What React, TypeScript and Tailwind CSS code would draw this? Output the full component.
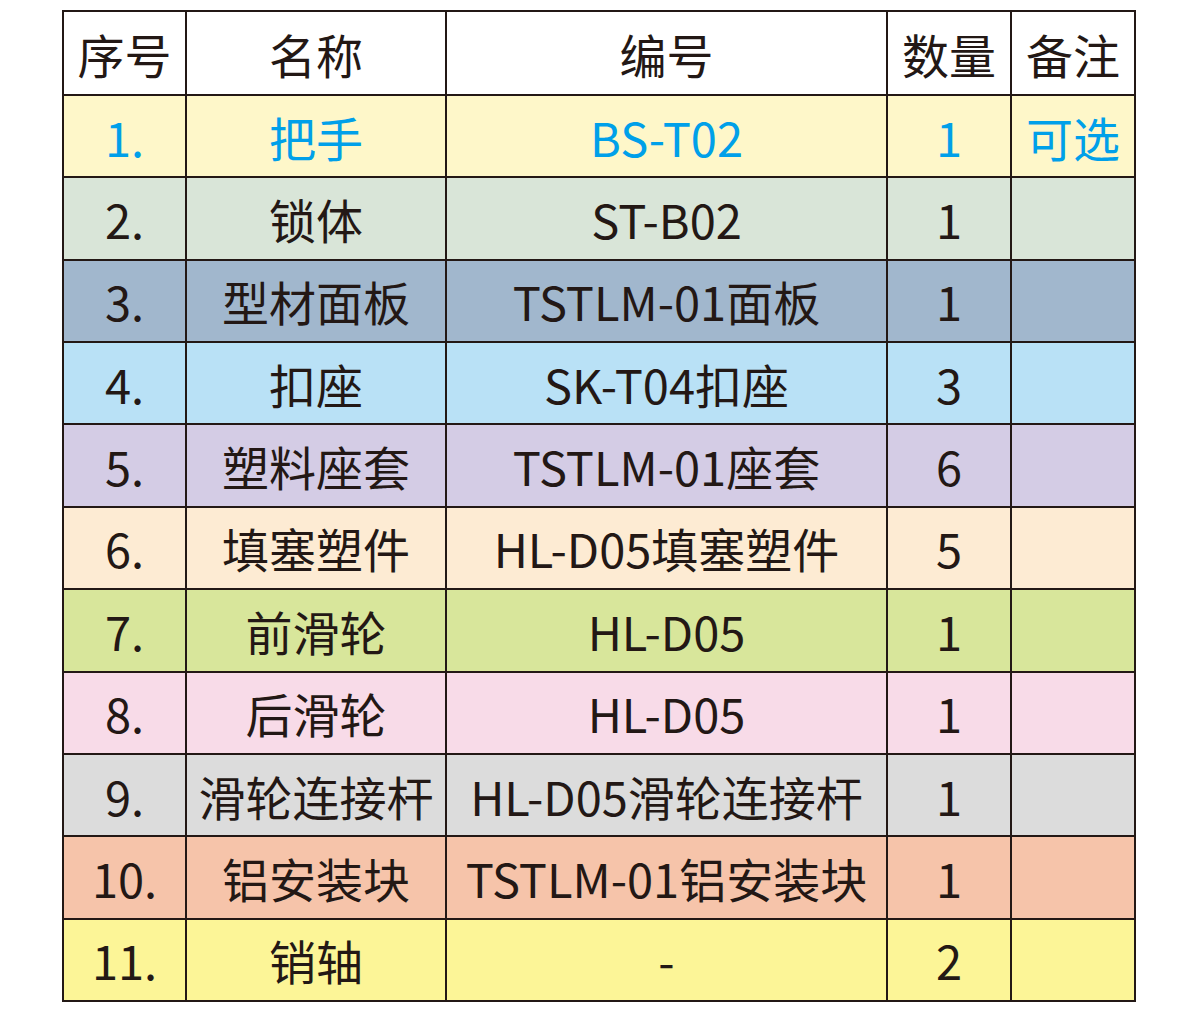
const rows = [
  { no: "1.", name: "把手", code: "BS-T02", qty: "1", note: "可选", bg: "bg-[#fef7c9]", blue: true },
  { no: "2.", name: "锁体", code: "ST-B02", qty: "1", note: "", bg: "bg-[#d9e5d8]" },
  { no: "3.", name: "型材面板", code: "TSTLM-01面板", qty: "1", note: "", bg: "bg-[#a1b7cd]" },
  { no: "4.", name: "扣座", code: "SK-T04扣座", qty: "3", note: "", bg: "bg-[#b9e1f6]" },
  { no: "5.", name: "塑料座套", code: "TSTLM-01座套", qty: "6", note: "", bg: "bg-[#d4cce5]" },
  { no: "6.", name: "填塞塑件", code: "HL-D05填塞塑件", qty: "5", note: "", bg: "bg-[#fdebd3]" },
  { no: "7.", name: "前滑轮", code: "HL-D05", qty: "1", note: "", bg: "bg-[#d8e69b]" },
  { no: "8.", name: "后滑轮", code: "HL-D05", qty: "1", note: "", bg: "bg-[#f8dbe8]" },
  { no: "9.", name: "滑轮连接杆", code: "HL-D05滑轮连接杆", qty: "1", note: "", bg: "bg-[#dcdcdc]" },
  { no: "10.", name: "铝安装块", code: "TSTLM-01铝安装块", qty: "1", note: "", bg: "bg-[#f6c4aa]" },
  { no: "11.", name: "销轴", code: "-", qty: "2", note: "", bg: "bg-[#fcf597]" },
];

function Cell({ children, bg, blue }: { children: React.ReactNode; bg: string; blue?: boolean }) {
  return (
    <div
      className={`${bg} flex items-center justify-center whitespace-nowrap text-[47px] leading-none ${
        blue ? "text-[#00a0e9]" : "text-[#231815]"
      }`}
    >
      {children}
    </div>
  );
}

export default function App() {
  return (
    <div
      className="w-[1200px] h-[1013px] bg-white pt-[10px] pl-[62px]"
      style={{ fontFamily: '"Noto Sans CJK SC", "Noto Sans", sans-serif' }}
    >
      <div className="grid w-[1074px] h-[992px] gap-[2px] p-[2px] bg-[#231815] grid-cols-[121px_258px_439px_122px_122px] grid-rows-[82px_repeat(11,1fr)]">
        {["序号", "名称", "编号", "数量", "备注"].map((h) => (
          <Cell key={h} bg="bg-white">
            {h}
          </Cell>
        ))}
        {rows.map((r) => (
          <>
            <Cell key={r.no + "a"} bg={r.bg} blue={r.blue}>{r.no}</Cell>
            <Cell key={r.no + "b"} bg={r.bg} blue={r.blue}>{r.name}</Cell>
            <Cell key={r.no + "c"} bg={r.bg} blue={r.blue}>{r.code}</Cell>
            <Cell key={r.no + "d"} bg={r.bg} blue={r.blue}>{r.qty}</Cell>
            <Cell key={r.no + "e"} bg={r.bg} blue={r.blue}>{r.note}</Cell>
          </>
        ))}
      </div>
    </div>
  );
}
